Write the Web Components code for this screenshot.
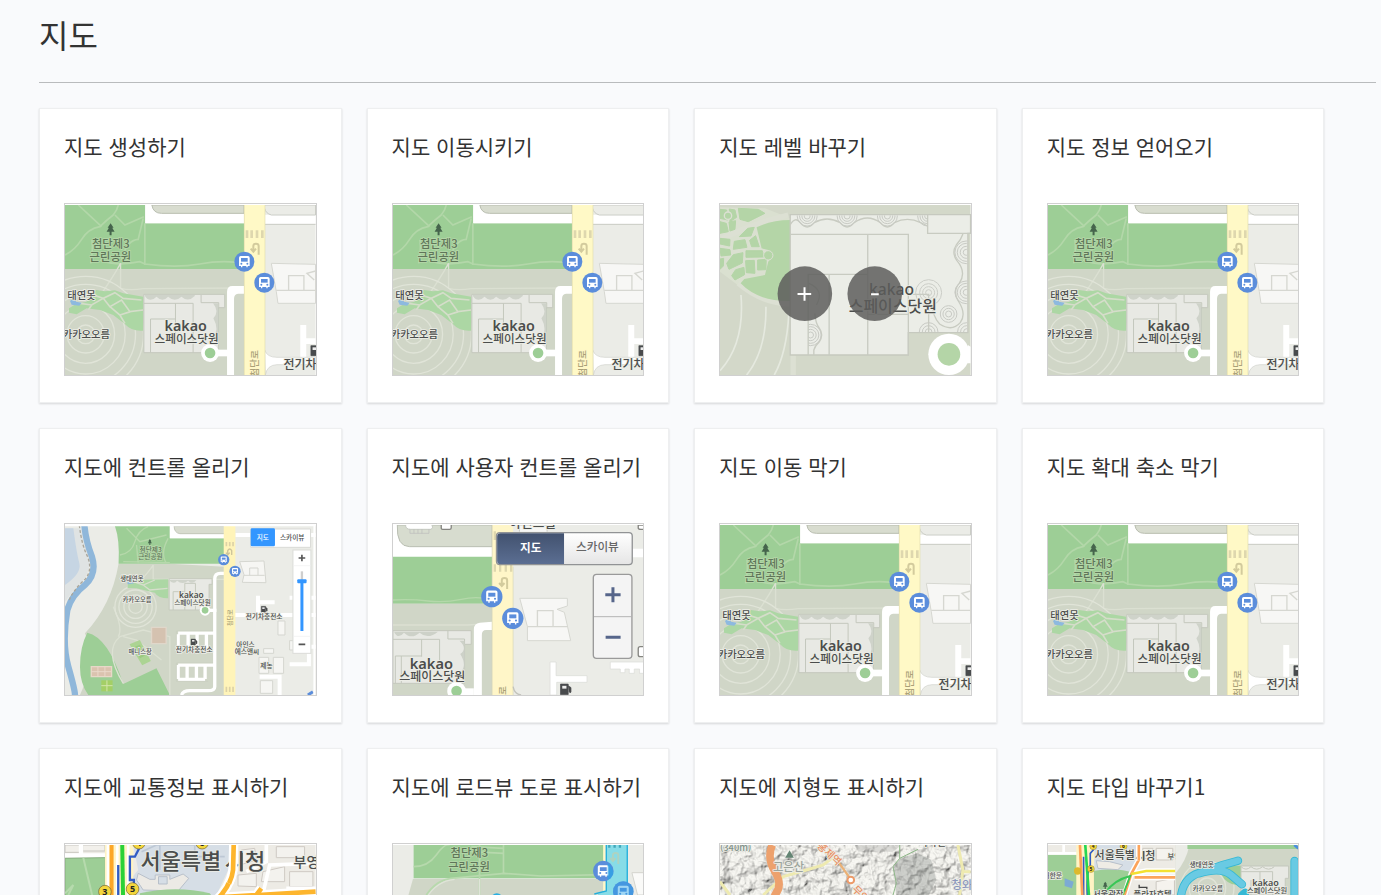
<!DOCTYPE html>
<html lang="ko">
<head>
<meta charset="utf-8">
<meta name="viewport" content="width=device-width, initial-scale=1">
<title>지도</title>
<style>
  body { margin: 0; background: #f9fafc; color: #333; font-family: "Noto Sans CJK KR", "Noto Sans", sans-serif; }
</style>
</head>
<body>
<sample-page>
  <span slot="heading">지도</span>
  <sample-card kind="basic">지도 생성하기</sample-card>
  <sample-card kind="basic">지도 이동시키기</sample-card>
  <sample-card kind="level">지도 레벨 바꾸기</sample-card>
  <sample-card kind="basic">지도 정보 얻어오기</sample-card>
  <sample-card kind="control">지도에 컨트롤 올리기</sample-card>
  <sample-card kind="custom">지도에 사용자 컨트롤 올리기</sample-card>
  <sample-card kind="basic">지도 이동 막기</sample-card>
  <sample-card kind="basic">지도 확대 축소 막기</sample-card>
  <sample-card kind="traffic">지도에 교통정보 표시하기</sample-card>
  <sample-card kind="roadview">지도에 로드뷰 도로 표시하기</sample-card>
  <sample-card kind="terrain">지도에 지형도 표시하기</sample-card>
  <sample-card kind="types">지도 타입 바꾸기1</sample-card>
</sample-page>

<template id="page-template">
  <style>
    :host { display: block; padding: 0 5px 25px 39px; }
    h1 { margin: 0; padding: 10px 0 24px; font-size: 32px; line-height: 48px; font-weight: 400; border-bottom: 1px solid #b9bbbd; }
    main { display: grid; grid-template-columns: repeat(4, 24.5%); row-gap: 25px; margin-top: 25px; }
  </style>
  <h1><slot name="heading"></slot></h1>
  <main><slot></slot></main>
</template>

<template id="card-template">
  <style>
    :host { display: block; padding-right: 25px; min-width: 0; }
    a { display: block; box-sizing: border-box; padding: 24px 24px 26px; border: 1px solid #eeeff0; background: #fff; color: inherit; text-decoration: none; box-shadow: 0 1px 2px rgba(0,0,0,.14); }
    h2 { margin: 0; padding-bottom: 44px; font-size: 21px; line-height: 26px; font-weight: 400; white-space: nowrap; }
  </style>
  <a href="#"><h2><slot></slot></h2><map-thumb></map-thumb></a>
</template>

<template id="thumb-template">
  <style>
    :host { display: block; box-sizing: border-box; height: 173px; padding-top: 1px; border: 1px solid #d0d0d0; overflow: hidden; }
    svg { display: block; width: 100%; height: 170px; }
    text { font-family: "Noto Sans CJK KR", sans-serif; font-weight: 500; fill: #4b4d4c; stroke: #ecede6; stroke-width: 5px; paint-order: stroke; stroke-linejoin: round; }
    .latin { font-family: "Noto Sans", sans-serif; font-weight: 600; }
    .green { fill: #5f7659; stroke: #b5d7a9; }
    .plain { stroke: none; }
  </style>
  <svg preserveAspectRatio="none" role="img" aria-label="지도 미리보기"></svg>
</template>

<script>
const bus = (x, y, r = 30) => `<g transform="translate(${x} ${y}) scale(${r / 30})">
  <circle r="30" fill="#5b8ddb"/><path d="M-16 13V-12Q-16-17-11-17H11Q16-17 16-12V13H10V17H6V13H-6V17H-10V13Z" fill="#fff"/>
  <path d="M-10-11H10V0H-10Z" fill="#5b8ddb"/><circle cx="-9" cy="6" r="3" fill="#5b8ddb"/><circle cx="9" cy="6" r="3" fill="#5b8ddb"/></g>`;

const tree = (x, y, s = 1) => `<path transform="translate(${x} ${y}) scale(${s})" d="M0-18L9-5H5L12 7H3V18H-3V7H-12L-5-5H-9Z" fill="#45644c"/>`;

const pump = (x, y, s = 1) => `<g transform="translate(${x} ${y}) scale(${s})"><path d="M-12 15V-15H10V15ZM10-10L18-5V8Q14 12 12 5" fill="#494b4d" stroke="#494b4d" stroke-width="2"/><path d="M-7-10H5V-2H-7Z" fill="#eee"/></g>`;

const rings = (x, y, list, color, w = 4) => list.map(r => `<circle cx="${x}" cy="${y}" r="${r}" fill="none" stroke="${color}" stroke-width="${w}"/>`).join('');

const uturn = (x, y) => `<path transform="translate(${x} ${y})" d="M12 18V-8Q12-15 4-15T-4-8V6M-12 0L-4 9L4 0" fill="none" stroke="#d3cb9d" stroke-width="6"/>`;

const basic = `
  <rect x="15" y="15" width="753" height="510" fill="#ebece7"/>
  <path d="M15 205H553V525H15Z" fill="#d0d6c7"/>
  <path d="M15 15H256V70H553V207H15Z" fill="#9dce96"/>
  <g fill="none" stroke="#b3d7a9" stroke-width="5">
    <path d="M15 165Q45 150 65 118T120 80Q140 60 160 45Q172 30 175 15M55 15L125 80M165 45L195 75L252 50M185 180Q200 120 235 118L250 55M92 190Q100 150 96 120M120 180Q170 200 240 185L255 192Q350 205 420 192T553 190M255 70V195"/></g>
  <g fill="none" stroke="#dbe0d2" stroke-width="4"><path d="M125 280Q160 230 182 190V265Q210 272 250 266L553 264"/></g>
  ${rings(77, 403, [28, 56, 87, 119, 150, 174], '#e0e4d8')}
  <path d="M108 270L135 274L165 271L190 280L250 290V392Q215 395 195 372L160 345L120 330L80 325L50 343L27 338V325L48 312L80 305L90 285Z" fill="#acd7a4"/>
  <path d="M100 285L130 295L165 278L190 295L245 300M60 310L95 315L130 295L150 320L185 300L210 335L250 330M150 320L180 345L195 370M95 315L85 330M180 345L212 335" fill="none" stroke="#d5ddca" stroke-width="5"/>
  <path d="M30 303L44 292L48 305L65 308L58 317L35 314Z" fill="#8db9df"/>
  <path d="M256 15H553V70H256Z" fill="#fff"/><path d="M276 15H553V40H305Q280 40 276 15Z" fill="#d8dccf" stroke="#b8bdaf" stroke-width="3"/>
  <path d="M252 283H495V323H476V458H252Z" fill="#e8e9e4" stroke="#c4c8bd" stroke-width="3"/>
  <path d="M252 310H400V458M347 310V430M272 458V357H348M424 285V308H477V325" fill="none" stroke="#c4c8bd" stroke-width="3"/>
  <path d="M255 288Q270 310 290 290Q308 308 325 290Q345 308 365 290Q385 308 405 288V285H255ZM460 310Q480 335 461 355Q480 390 460 415L475 415V310Z" fill="#cfd3ca"/>
  <path d="M502 525V275Q502 258 518 258H553V281H535Q523 282 523 296V525Z" fill="#fff"/>
  <path d="M450 459H505" stroke="#fff" stroke-width="20"/><circle cx="451" cy="459" r="27" fill="#fff"/><circle cx="451" cy="459" r="16" fill="#9dce96"/>
  <path d="M615 44H768V72H615Z" fill="#fff"/><path d="M615 15H768V45H635Q618 40 615 25M615 73H768" fill="none" stroke="#c9cbc4" stroke-width="3"/>
  <path d="M635 190L768 193V310H655L650 275Z" fill="#f7f7f5" stroke="#d6d7d1" stroke-width="3"/><path d="M650 271H768M687 271V227H733V271M768 213L742 220L764 240" fill="none" stroke="#d6d7d1" stroke-width="4"/>
  <path d="M722 375H740V415H768V432H740V472H722Z" fill="#fff"/>
  <path d="M615 450Q622 472 652 472H768V494H652Q622 495 617 525Z" fill="#fff" stroke="#cfd0ca" stroke-width="2"/>
  <path d="M553 15H616V525H553Z" fill="#fff9c6"/><path d="M554 15V525M616 15V525" stroke="#e1dcae" stroke-width="2"/>
  <path d="M562 91V114M576 91V114M592 91V114M608 91V114" stroke="#ded7ae" stroke-width="8"/>
  ${uturn(585, 146)}
  ${tree(152, 88)}${bus(554, 185)}${bus(614, 248)}
  <text class="green" x="96" y="144" font-size="34">첨단제3</text><text class="green" x="89" y="183" font-size="34">근린공원</text>
  <text x="22" y="297" font-size="31">태연못</text><text x="8" y="413" font-size="31" fill="#666">카카오오름</text>
  <text class="latin" x="314" y="393" font-size="43">kakao</text><text x="284" y="429" font-size="35">스페이스닷원</text>
  ${pump(766, 452, 1)}<text x="672" y="507" font-size="36">전기차충전소</text>
  <text transform="translate(595 530) rotate(-90)" font-size="29" style="fill:#aaa177;stroke:#fff7c8">첨단로</text>`;

const level = `
  <rect x="15" y="15" width="753" height="510" fill="#d3d8c9"/>
  <path d="M15 22L150 25L226 55V310L150 300L77 262L15 215Z" fill="#dae0d0"/>
  <path d="M15 120Q100 75 220 45M235 525V465M70 250Q140 310 226 312" fill="none" stroke="#dce0d3" stroke-width="16"/>
  <path d="M125 82Q170 60 226 60V303Q130 305 77 250L88 237L150 225L160 185L175 165L160 150L140 145Z" fill="#b4d5a7"/>
  <g fill="#b4d5a7" stroke="#b4d5a7" stroke-width="3" stroke-linejoin="round"><path d="M15 28L35 30L38 60L15 55ZM43 27L60 30L65 52L45 65ZM70 25L130 28L150 40L100 65L75 58ZM42 66L62 62L60 88L45 93ZM15 65L34 70L40 95L15 100ZM73 110L98 85L118 82L108 108ZM15 115L45 118L44 138L15 132ZM58 124L90 119L96 142L55 148ZM104 121L122 107L133 140L110 140ZM15 145L45 149L47 165L18 168ZM93 152L142 152L147 171L93 172ZM15 177L26 175L25 198L15 208ZM35 190L55 164L84 158L82 189L42 208ZM92 182L118 181L120 220L94 218ZM128 180L154 178L153 209L128 210ZM50 227L62 209L87 202L89 224L60 240Z"/></g>
  <circle cx="39" cy="47" r="11" fill="#b4d5a7" stroke="#dce0d3" stroke-width="4"/><circle cx="160" cy="166" r="14" fill="#b4d5a7" stroke="#dce0d3" stroke-width="3"/>
  <path d="M78 285Q90 430 15 512M153 320Q155 450 95 525M222 340Q215 460 178 525" fill="none" stroke="#e5e9df" stroke-width="5"/>
  <path d="M226 44H768V100H760V398H581V465H226Z" fill="#ebede7" stroke="#c6c9bf" stroke-width="4"/>
  <g fill="none" stroke="#c8cbc1" stroke-width="4"><path d="M226 103H581V465M459 103V465M280 465V223H459M343 223V465M459 343H581M581 283H642V398M639 44V100H768"/>
  <path d="M226 74Q242 48 256 68Q277 94 298 68Q337 46 376 68Q397 94 418 68Q458 40 497 68Q518 94 539 68Q578 48 618 68L639 78"/>
  <path d="M745 102Q740 118 725 135Q710 158 727 182Q757 217 734 250Q712 275 733 306Q756 342 737 368Q712 396 675 372Q654 350 652 310"/>
  <path d="M297 465V450Q300 438 313 426Q328 405 313 384Q302 370 300 340M282 250Q330 270 305 315"/></g>
  <clipPath id="inside"><path d="M226 46H638V100H758V396H582V463H280V223H226Z"/></clipPath><g clip-path="url(#inside)">
  ${[277, 397, 518, 639].map(x => rings(x, 48, [9, 16, 23, 30], '#c8cac4', 3)).join('')}${rings(755, 157, [9, 18, 27, 34], '#c8cac4', 3)}${rings(755, 277, [9, 18, 27, 34], '#c8cac4', 3)}
  ${rings(642, 278, [9, 18, 27, 39], '#cbcdc7', 3)}${rings(702, 342, [9, 17, 25], '#c8cac4', 3)}${rings(287, 405, [9, 17, 25, 32], '#c8cac4', 3)}${rings(642, 396, [10, 19, 28], '#c8cac4', 3)}${rings(757, 396, [10, 19, 28], '#c8cac4', 3)}</g>
  <circle cx="703" cy="463" r="62" fill="#fff"/><path d="M760 435L768 440V490L758 490Z" fill="#fff"/><circle cx="703" cy="463" r="34" fill="#b4d5a7"/>
  <text class="latin" x="463" y="286" font-size="47" style="font-weight:500">kakao</text><text x="402" y="335" font-size="48">스페이스닷원</text>
  <circle cx="270" cy="281" r="82" fill="#5c5c5a" fill-opacity=".84"/><circle cx="480" cy="281" r="82" fill="#5c5c5a" fill-opacity=".84"/>
  <path d="M248 282H289M269 262V302M469 283H492" stroke="#fff" stroke-width="6"/>`;

const control = `
  <rect x="15" y="15" width="753" height="510" fill="#ebece7"/>
  <path d="M15 25H65L90 100Q95 170 45 205L15 245Z" fill="#dfe3e3"/><path d="M15 25H40Q50 100 58 130T15 195Z" fill="#c6d5e3"/>
  <path d="M73 15Q78 65 96 110Q112 160 75 195Q35 225 22 270Q5 370 25 440T45 525" fill="none" stroke="#8fb7da" stroke-width="19"/>
  <path d="M58 15Q65 75 83 110Q100 155 70 183T28 240" fill="none" stroke="#aaa69b" stroke-width="4" stroke-dasharray="9 6"/>
  <path d="M176 131H330L495 140V525H60Q110 420 75 340Q155 255 176 131Z" fill="#d0d6c7"/>
  <path d="M175 18H330V55H493V131H176Q180 60 165 18ZM82 338Q145 352 190 492L290 445L330 525H85Q60 490 60 440Q60 380 82 338Z" fill="#9dce96"/>
  <g fill="none" stroke="#b6d8ab" stroke-width="4"><path d="M180 105Q215 100 225 65T265 20M200 25L240 65L320 45M320 130Q300 100 325 55M235 130L230 75M190 125L330 128"/></g>
  <g fill="none" stroke="#dce1d3" stroke-width="4"><path d="M240 185Q275 145 280 135V178H495M190 490Q130 390 180 350L250 330L330 350V525M175 350Q190 325 160 260M190 350L230 360L305 420"/></g>
  ${rings(227, 260, [20, 35, 50, 62], '#e0e4d8')}
  <path d="M205 180L325 178V235Q295 235 285 218L230 205L203 204Z" fill="#acd7a4"/><path d="M220 185L250 195L285 180M250 195L270 210L323 205" stroke="#d6decc" stroke-width="4" fill="none"/><path d="M203 182L218 177L223 190L203 193Z" fill="#8db9df"/>
  <path d="M328 176H457V193H448V270H328Z" fill="#e8e9e4" stroke="#c6cabe" stroke-width="3"/><path d="M340 270V215H375V190H407V270M375 215V270" fill="none" stroke="#c6cabe" stroke-width="3"/><path d="M328 180Q340 196 352 182Q368 196 385 182Q398 196 410 180Z" fill="#cfd3ca"/>
  <path d="M330 18H495V55H330Z" fill="#fff"/><path d="M343 18H495V41H360Q343 38 343 18Z" fill="#d8dccf" stroke="#c2c6b8" stroke-width="3"/>
  <path d="M495 160H482Q465 160 465 177V500Q465 512 445 512H390Q370 512 365 525M355 343V390M385 343V390M412 343V390M440 343V390M355 339H465M355 435V477M382 435V477M410 435V477M436 435V477M355 435H465M355 478H436" fill="none" stroke="#fff" stroke-width="10"/>
  <path d="M350 333H460M350 429H460M350 484H445M350 333V400M350 429V484" stroke="#c9cec0" stroke-width="2"/>
  <path d="M275 322H319V371H275Z" fill="#d5c2b0" stroke="#e0d7ca" stroke-width="4"/><path d="M209 373L240 360L273 423L247 436Z" fill="#acd493"/><path d="M225 380L240 374L255 407L240 415Z" fill="#9bca82"/>
  <path d="M94 440H155V470H94Z" fill="#dbc3af" stroke="#e8d8c8" stroke-width="4"/><path d="M114 440V470M135 440V470M94 455H155" stroke="#ead9ca" stroke-width="3"/><path d="M124 481H158V514H124Z" fill="#a4cf66"/><path d="M141 481V514M124 497H158" stroke="#d3e5ab" stroke-width="3"/>
  <path d="M527 45H768M595 227V285M590 247H645M525 285H768M690 233H768M600 470H660V525M690 433H748V400M695 380H768" fill="none" stroke="#fff" stroke-width="12"/>
  <path d="M540 125L613 123L619 188L548 187L553 164ZM655 303H676V345H655ZM612 386H642V400H612ZM598 412H627V460H598ZM641 412H672V460H641ZM602 482H639V520H602ZM690 362H710V390H690Z" fill="#f6f6f3" stroke="#d5d6d0" stroke-width="3"/><path d="M570 166V144H595V166M553 166H615" stroke="#d5d6d0" stroke-width="3" fill="none"/>
  <path d="M492 15H527V525H492Z" fill="#fff4b9"/><path d="M500 66V79M510 66V79M520 66V79M500 500V516M510 500V516M520 500V516" stroke="#ddd2a6" stroke-width="5"/>
  <path d="M516 105V92Q510 82 504 92V103M499 98L504 105L510 98" stroke="#cdc49b" stroke-width="4" fill="none"/>
  <path d="M436 271H470" stroke="#fff" stroke-width="10"/><circle cx="436" cy="271" r="16" fill="#fff"/><circle cx="436" cy="271" r="10" fill="#9dce96"/>
  ${bus(492, 119, 17)}${bus(526, 154, 17)}${tree(270, 66, .5)}${pump(612, 268, .6)}${pump(401, 366, .6)}
  <text class="green" x="239" y="97" font-size="20">첨단제3</text><text class="green" x="235" y="118" font-size="20">근린공원</text>
  <text x="181" y="182" font-size="19">생태연못</text><text x="188" y="247" font-size="19">카카오오름</text>
  <text class="latin" x="358" y="235" font-size="25">kakao</text><text x="343" y="255" font-size="20">스페이스닷원</text>
  <text x="558" y="298" font-size="20">전기차충전소</text><text x="348" y="396" font-size="20">전기차충전소</text>
  <text x="206" y="403" font-size="19">매니스장</text><text x="530" y="382" font-size="20">아인스</text><text x="525" y="403" font-size="20">에스앤씨</text><text x="602" y="445" font-size="20">제농</text>
  <text transform="translate(517 318) rotate(-90)" font-size="18" style="fill:#aaa177;stroke:#fff4b9">첨단로</text>
  <path d="M573 27H753V82H573Z" fill="#fff" stroke="#d9dad6" stroke-width="3"/><rect x="573" y="25" width="73" height="54" rx="4" fill="#3396ff"/>
  <text class="plain" x="591" y="60" font-size="20" style="fill:#fff">지도</text><text class="plain" x="661" y="59" font-size="20">스카이뷰</text>
  <rect x="700" y="90" width="54" height="310" fill="#fff" stroke="#dbdcd8" stroke-width="3"/><path d="M700 137H754M700 349H754" stroke="#eee" stroke-width="2"/><path d="M717 114H737M727 104V124M717 373H737" stroke="#555" stroke-width="5"/><path d="M727 154V180" stroke="#cecece" stroke-width="7"/><path d="M727 182V333" stroke="#3396ff" stroke-width="9"/><rect x="713" y="178" width="28" height="12" rx="3" fill="#3396ff"/>
  <path d="M745 525L760 515" stroke="#5b8ddb" stroke-width="9"/><path d="M15 16H768M764 15V525" stroke="#fff" stroke-width="5"/>`;

const custom = `
  <rect x="15" y="15" width="753" height="510" fill="#ebece7"/>
  <path d="M15 15H313V120H15Z" fill="#fff"/><path d="M28 15H313V80H65Q25 80 28 15Z" fill="#d7dccf" stroke="#b9beb2" stroke-width="3"/><path d="M53 15Q52 28 68 28H130Q137 22 132 15" fill="#fff" stroke="#c4c8c0" stroke-width="3"/><path d="M66 28V40H123V28M78 28V40M90 28V40M102 28V40" fill="none" stroke="#bbb" stroke-width="2"/>
  <path d="M160 15V25Q160 28 164 28H185Q190 28 190 23V15" fill="#fff" stroke="#858580" stroke-width="4"/>
  <path d="M15 110H313V251H15Z" fill="#9dce96"/><path d="M15 240Q70 237 120 243T220 238T313 240" fill="none" stroke="#b4d8aa" stroke-width="4"/><path d="M15 251H313V525H15Z" fill="#d0d6c7"/><path d="M15 315H240L313 310" fill="none" stroke="#dbe0d2" stroke-width="4"/>
  <path d="M15 332H250V373H230V490H15Z" fill="#e8e9e4" stroke="#c4c8bd" stroke-width="3"/><path d="M15 358H155V430M101 358V410M22 490V408H101M180 332V357H230V373M40 408V490" fill="none" stroke="#c4c8bd" stroke-width="3"/><path d="M18 335Q30 360 48 338Q70 360 95 338Q120 360 150 335ZM215 362Q240 385 217 402Q240 438 215 460H230V362Z" fill="#cdd1c8"/>
  <path d="M258 525V328Q258 310 276 308L313 305V330H295Q282 330 282 345V525Z" fill="#fff"/><path d="M206 515H258" stroke="#fff" stroke-width="20"/><circle cx="206" cy="513" r="28" fill="#fff"/><circle cx="206" cy="513" r="16" fill="#9dce96"/>
  <path d="M313 15H376V525H313Z" fill="#fff6c8"/><path d="M376 140V525M313 15V525" stroke="#d8d6b7" stroke-width="2"/><path d="M321 34V60M321 133V155M337 133V155M354 133V155M370 133V155" stroke="#ded7ae" stroke-width="7"/>${uturn(346, 189)}
  <path d="M376 86H768V112H376Z" fill="#fff"/><path d="M395 35V15H478V35" fill="#f7f7f5" stroke="#c9cbc4" stroke-width="3"/>
  <path d="M396 235H539V258L508 268L530 277L549 362H419V320Z" fill="#f7f7f5" stroke="#d6d7d1" stroke-width="3"/><path d="M419 320H538M449 320V272H496V320" fill="none" stroke="#d6d7d1" stroke-width="4"/>
  <path d="M487 426H505V467H598V487H507V525H487ZM668 426H768V460H756V447H740V460H725V447H712V458H698V447H668Z" fill="#fff" stroke="#dadbd6" stroke-width="2"/><path d="M376 500Q380 523 400 525" fill="none" stroke="#c3c4bc" stroke-width="4"/>
  <path d="M768 15H752V24Q752 28 760 28H768M768 380H758Q752 380 752 386V404Q752 410 758 410H768" fill="#fff" stroke="#858580" stroke-width="4"/>
  <text class="latin" x="65" y="446" font-size="44">kakao</text><text x="34" y="484" font-size="36">스페이스닷원</text>${bus(312, 230, 32)}${bus(375, 295, 32)}${pump(531, 508, 1.05)}
  <text x="365" y="20" font-size="38">아인스빌</text><text transform="translate(356 525) rotate(-90)" font-size="29" style="fill:#aaa177;stroke:#fff6c8">로</text>
  <linearGradient id="navy" x2="0" y2="1"><stop stop-color="#42526f"/><stop offset="1" stop-color="#5b6e92"/></linearGradient><linearGradient id="white" x2="0" y2="1"><stop stop-color="#fff"/><stop offset="1" stop-color="#e5e5e5"/></linearGradient>
  <rect x="326" y="38" width="408" height="96" rx="10" fill="url(#white)" stroke="#919395" stroke-width="4"/><path d="M529 40V132H338Q328 132 328 122V50Q328 40 338 40Z" fill="url(#navy)"/>
  <text class="plain" x="397" y="95" font-size="35" style="fill:#fff;font-weight:700">지도</text><text class="plain" x="565" y="94" font-size="35" style="fill:#666">스카이뷰</text>
  <rect x="617" y="163" width="116" height="252" rx="10" fill="#f4f4f4" stroke="#9a9a9a" stroke-width="4"/><path d="M619 290H731" stroke="#b4b4b4" stroke-width="3"/><path d="M653 224H699M676 202V247M654 352H699" stroke="#56658a" stroke-width="9"/>`;

const station = (x, y, n, s = 1) => `<g transform="translate(${x} ${y}) scale(${s})"><circle r="19" fill="#f3d63d" stroke="#705f38" stroke-width="2"/><text class="plain latin" x="-8" y="10" font-size="27" style="fill:#222;font-weight:700">${n}</text></g>`;

const city = `
  <rect x="15" y="225" width="753" height="510" fill="#edebe5"/>
  <path d="M15 225H60V247H15ZM68 225H135V243H68Z" fill="#f2f0eb" stroke="#c9c7c0" stroke-width="3"/><path d="M15 256H140M63 225V260" stroke="#fff" stroke-width="13"/>
  <path d="M15 265L136 263V735H15Z" fill="#9dce96" stroke="#86ae7e" stroke-width="3"/><path d="M70 263L100 390M15 370L40 345L25 375" stroke="#b6daad" stroke-width="6" fill="none"/>
  <path d="M220 225H510V290L470 375V735H210V330L235 300Z" fill="#d6dee6"/><path d="M290 225H405V260H495M245 245L290 225M300 225V300" fill="none" stroke="#bdc8d5" stroke-width="5"/>
  <path d="M235 310L270 328H286V315H330V328L370 312L387 325L355 363L250 360L230 330Z" fill="#eceae5" stroke="#b8c0ca" stroke-width="3"/><path d="M296 320H322V342H296Z" fill="#d6dee6" stroke="#b8c0ca" stroke-width="3"/>
  <path d="M240 370Q350 345 450 370L480 410L455 735H235Z" fill="#9dce96"/>
  <path d="M135 225H220V735H135Z" fill="#fff4c4"/><path d="M144 225V735M172 225V735M205 225V735" stroke="#fff" stroke-width="8"/>
  <path d="M238 235L225 260H210V330H222V345Q205 375 210 735M175 285V735" fill="none" stroke="#315cc5" stroke-width="7"/>
  <path d="M155 225V735" stroke="#fca728" stroke-width="12"/><path d="M187 225L195 735" stroke="#2bd137" stroke-width="12"/>
  <path d="M545 240L585 235L590 270L540 285ZM650 230H735V263H650ZM610 305L675 290V335H605ZM690 305H760V350H690ZM535 315L590 310V350L535 348Z" fill="#f3f2ee" stroke="#cfcac4" stroke-width="3"/><path d="M620 225V275L560 305M768 280L630 285L610 370M680 355H768" stroke="#fff" stroke-width="11" fill="none"/>
  <path d="M522 225L520 300Q510 355 465 395L430 735M475 382L768 365M605 355L590 375" fill="none" stroke="#fff" stroke-width="28"/><path d="M522 225L520 300Q510 355 465 395L430 735M475 382L768 365M605 355L590 375" fill="none" stroke="#fdb52d" stroke-width="14"/>
  ${station(237, 218, '4')}${station(427, 218, '6')}${station(135, 365, '3')}${station(218, 357, '5')}
  <text x="242" y="298" font-size="66">서울특별</text><text x="495" y="298" font-size="66">시청</text><path d="M522 225L520 300Q518 320 508 340" fill="none" stroke="#fff" stroke-width="26"/><path d="M522 225L520 300Q518 320 508 340" fill="none" stroke="#fdb52d" stroke-width="14"/><path d="M546 248V304" stroke="#4b4d4c" stroke-width="6"/><text x="702" y="291" font-size="42">부영</text>`;

const roadview = `
  <rect x="15" y="225" width="753" height="510" fill="#ebece7"/><path d="M77 225H653V325H77Z" fill="#9dce96"/><path d="M75 327H650V735H15L60 380Z" fill="#d0d6c7"/>
  <path d="M77 290Q120 290 145 255T185 225M250 230L347 235M250 245L347 250M275 325V225M115 375Q145 330 190 325L350 310L460 318L653 314M347 225V310M275 325V375" fill="none" stroke="#b7d9ad" stroke-width="5"/><path d="M115 385Q145 333 200 328M275 327V390" fill="none" stroke="#dfe4d8" stroke-width="4"/>
  <path d="M650 225V363L625 375H768V225Z" fill="#ebece7"/><path d="M650 225V363" stroke="#fff7c8" stroke-width="7"/><path d="M656 225H719V735H630V372L656 363Z" fill="#87dce7"/><path d="M656 225V363L620 372M719 225V400" fill="none" stroke="#22aedb" stroke-width="4"/><path d="M665 225V233M681 225V233M697 225V233" stroke="#42a8bb" stroke-width="7"/><g opacity=".5">${uturn(680, 264)}</g>
  <path d="M733 308H768V375H750Z" fill="#fafaf8" stroke="#d4d5cf" stroke-width="3"/>${bus(647, 303, 31)}${bus(707, 365, 31)}<path d="M660 278Q678 290 677 312Q672 325 660 331Z" fill="#2aa5e7" opacity=".7"/><circle cx="707" cy="365" r="31" fill="#2aa5e7" opacity=".45"/><circle cx="327" cy="388" r="18" fill="#2aafe1"/>
  <text class="green" x="188" y="262" font-size="34">첨단제3</text><text class="green" x="181" y="302" font-size="34">근린공원</text>`;

const terrain = `
  <filter id="relief" x="0" y="0" width="1" height="1"><feTurbulence type="fractalNoise" baseFrequency=".03" numOctaves="4" seed="8"/><feDiffuseLighting surfaceScale="26" diffuseConstant="1.1" lighting-color="#f6f5f0"><feDistantLight azimuth="225" elevation="62"/></feDiffuseLighting></filter>
  <rect x="15" y="225" width="753" height="510" fill="#eeeeea"/><rect x="15" y="225" width="753" height="510" filter="url(#relief)" opacity=".6"/>
  <path d="M535 285L570 260L610 250L650 270L665 330L640 380H545Z" fill="#777b78" opacity=".32"/><path d="M420 225H560L535 245H430Z" fill="#777" opacity=".22"/>
  <path d="M15 335L45 375M145 375L205 320L275 300L325 285L355 262M730 225L745 300L735 375M745 305H768" fill="none" stroke="#eeeab0" stroke-width="9"/>
  <path d="M172 225Q155 265 180 305T180 375L165 430" fill="none" stroke="#eda16d" stroke-width="23"/>
  <path d="M610 238L555 265L535 290L545 340L535 375M555 225V265" stroke="#8fb989" stroke-width="3" fill="none"/>
  <path d="M370 275L408 328" stroke="#eab176" stroke-width="7"/><circle cx="408" cy="330" r="10" fill="#fff" stroke="#ec9a69" stroke-width="6"/>
  <path d="M224 241L237 263H211Z" fill="#638473"/><text x="174" y="304" font-size="34" style="fill:#9ca49c">고은산</text><text x="15" y="243" font-size="28" style="fill:#81918a">(340m)</text><text x="711" y="358" font-size="34" style="fill:#8b96bb">청와대</text>
  <text transform="translate(305 230) rotate(43)" font-size="31" style="fill:#e99064">홍제역</text><text transform="translate(410 360) rotate(45)" font-size="31" style="fill:#e99064">무악재</text><text x="612" y="228" font-size="30">북악산</text>`;

const types = `
  <rect x="15" y="225" width="383" height="510" fill="#edebe5"/><path d="M15 254H108V735H15Z" fill="#9dce96"/><path d="M15 250H108M62 225V250" stroke="#fff" stroke-width="8"/><path d="M65 325L92 335L87 355L65 348Z" fill="#7caad3"/>
  <path d="M155 225H285V290L258 320V735H150Z" fill="#d6dee6"/><path d="M150 303Q220 290 275 310L245 375H150Z" fill="#9dce96"/><path d="M160 272L200 275L240 285L225 299L165 295Z" fill="#efece5" stroke="#b8c0ca" stroke-width="3"/>
  <path d="M100 225H153V735H100Z" fill="#fff4c4"/><path d="M151 225V240L142 250V285Q130 310 133 375M122 260V375" stroke="#315cc5" stroke-width="5" fill="none"/><path d="M111 225L118 375" stroke="#fca45b" stroke-width="8"/><path d="M127 225L138 375" stroke="#24d653" stroke-width="8"/><circle cx="104" cy="303" r="11" fill="#ddb92d"/>${station(151, 229, '4', .55)}${station(242, 229, '6', .55)}${station(144, 297, '5', .55)}
  <path d="M300 235H330V265H300ZM340 235H390V270H340ZM340 335L395 325V375H340Z" fill="#f5f3ee" stroke="#ccc8c0" stroke-width="3"/>
  <path d="M288 225V270L265 312L245 375M265 312L310 303H398M275 322H398" fill="none" stroke="#fff" stroke-width="17"/><path d="M288 225V270L265 312L245 375M275 322H398" fill="none" stroke="#fca45b" stroke-width="8"/><path d="M265 312L310 303H398" fill="none" stroke="#f3e131" stroke-width="8"/><path d="M190 365Q215 330 262 318L240 375" fill="none" stroke="#38c656" stroke-width="6"/>
  ${tree(187, 346, .6)}<text x="155" y="268" font-size="33">서울특별</text><text x="277" y="269" font-size="33">시청</text><path d="M288 225V272" stroke="#fff" stroke-width="14"/><path d="M288 225V272" stroke="#fca45b" stroke-width="8"/><path d="M303 243V272" stroke="#4b4d4c" stroke-width="3"/><text x="374" y="266" font-size="22">부영</text><text x="0" y="323" font-size="21">대한문</text><text x="150" y="382" font-size="25">서울광장</text><text x="272" y="382" font-size="25">플라자호텔</text><path d="M289 355V344M289 352H312V358" stroke="#444" stroke-width="4" fill="none"/>
  <path d="M398 225H768V735H398Z" fill="#d0d6c7"/><path d="M398 225H440Q430 275 398 310Z" fill="#ebece7"/><path d="M434 225H768V237H434Z" fill="#9dce96"/>${rings(494, 354, [30, 55, 80], '#e0e4d8')}<path d="M490 285L595 287V345Q555 350 535 312Z" fill="#9dce96"/><path d="M595 288H738V325H728V375H595Z" fill="#e8e9e4" stroke="#c4c8bd" stroke-width="3"/><path d="M595 290Q610 305 625 290Q642 305 660 290Q678 305 695 290M595 305H690V375M625 330V375M652 305V375" fill="none" stroke="#c4c8bd" stroke-width="3"/>
  <path d="M415 375Q425 315 485 305L510 295L540 285L586 272M470 310Q535 290 565 315L598 343M756 273V375M598 377L608 368" fill="none" stroke="#35b8d4" stroke-width="25" stroke-linecap="round" stroke-linejoin="round"/><path d="M415 375Q425 315 485 305L510 295L540 285L586 272M470 310Q535 290 565 315L598 343M756 273V375" fill="none" stroke="#69cae3" stroke-width="20" stroke-linecap="round" stroke-linejoin="round"/>
  <text x="440" y="291" font-size="20">생태연못</text><text x="449" y="362" font-size="20">카카오오름</text><text class="latin" x="629" y="349" font-size="27">kakao</text><text x="613" y="370" font-size="22">스페이스닷원</text><path d="M755 225L768 235" stroke="#4b8dde" stroke-width="8"/>`;

const maps = { basic, level, control, custom, traffic: city, roadview, terrain, types };
const lower = new Set(['traffic', 'roadview', 'terrain', 'types']);

function attach(host, id) {
  const root = host.attachShadow({ mode: 'open' });
  root.append(document.getElementById(id).content.cloneNode(true));
  return root;
}

class MapThumb extends HTMLElement {
  static observedAttributes = ['kind'];
  constructor() { super(); attach(this, 'thumb-template'); }
  attributeChangedCallback(name, previous, kind) {
    const svg = this.shadowRoot.querySelector('svg');
    svg.setAttribute('viewBox', lower.has(kind) ? '15 225 753 510' : '15 15 753 510');
    svg.innerHTML = maps[kind] || '';
  }
}
customElements.define('map-thumb', MapThumb);

class SampleCard extends HTMLElement {
  constructor() { super(); attach(this, 'card-template'); }
  connectedCallback() {
    this.shadowRoot.querySelector('map-thumb').setAttribute('kind', this.getAttribute('kind'));
  }
}
customElements.define('sample-card', SampleCard);

class SamplePage extends HTMLElement {
  constructor() { super(); attach(this, 'page-template'); }
}
customElements.define('sample-page', SamplePage);
</script>
</body>
</html>
